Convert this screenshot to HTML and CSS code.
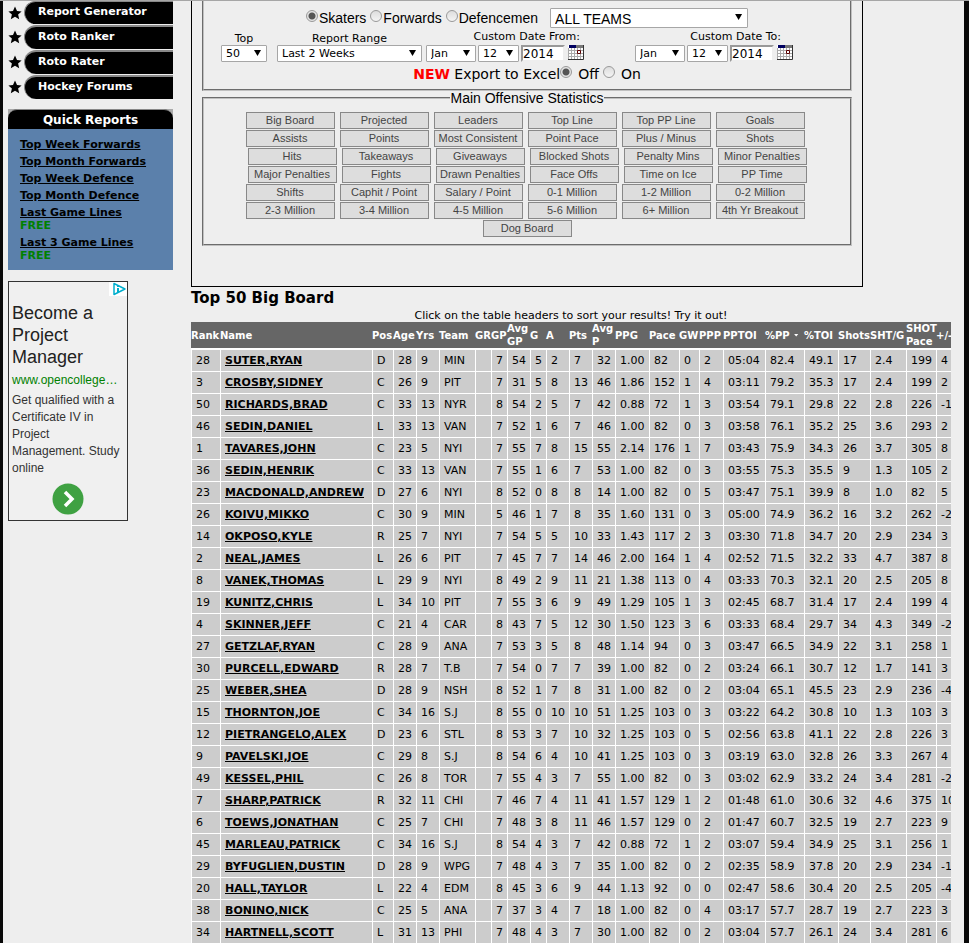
FILE: index.html
```html
<!DOCTYPE html>
<html lang="en">
<head>
<meta charset="utf-8">
<title>Top 50 Big Board</title>
<link rel="stylesheet" href="styles.css">
</head>
<body>
<svg class="defs" width="0" height="0" aria-hidden="true">
  <symbol id="star" viewBox="0 0 14 14"><path d="M7 0.6 9 5 13.6 5.4 10.1 8.5 11.2 13.2 7 10.8 2.8 13.2 3.9 8.5 0.4 5.4 5 5Z"/></symbol>
  <symbol id="calendar" viewBox="0 0 16 15">
    <path fill="#fff" d="M0 0h16v15H0z"/>
    <path fill="#777" d="M7 0h9v3H7z"/>
    <path fill="#000060" d="M1 0h7v3H1z"/>
    <path fill="none" stroke="#aaa" d="M.5 3v12M3.500 3v12M6.500 3v12M9.500 3v12M12.500 3v12M0 5.500h15M0 8.500h15M0 11.500h15"/>
    <path fill="none" stroke="#333" d="M15.500 0v14.500H0"/>
    <path fill="#fff" stroke="#5a0000" d="M9.500 5.500h3v3h-3z"/>
  </symbol>
</svg>
<div class="page">
  <aside class="sidebar">
    <nav>
      <ul class="menu">
        <li><svg class="star"><use href="#star"/></svg><a href="#">Report Generator</a></li>
        <li><svg class="star"><use href="#star"/></svg><a href="#">Roto Ranker</a></li>
        <li><svg class="star"><use href="#star"/></svg><a href="#">Roto Rater</a></li>
        <li><svg class="star"><use href="#star"/></svg><a href="#">Hockey Forums</a></li>
      </ul>
    </nav>
    <section class="quick">
      <h2>Quick Reports</h2>
      <ul>
        <li><a href="#">Top Week Forwards</a></li>
        <li><a href="#">Top Month Forwards</a></li>
        <li><a href="#">Top Week Defence</a></li>
        <li><a href="#">Top Month Defence</a></li>
        <li><a href="#">Last Game Lines</a><span class="free">FREE</span></li>
        <li><a href="#">Last 3 Game Lines</a><span class="free">FREE</span></li>
      </ul>
    </section>
    <section class="ad">
      <svg class="adchoices" viewBox="0 0 18 14"><path fill="none" stroke="#00aecd" stroke-width="1.500" stroke-linejoin="round" d="M5 1.500 16 7 5 12.500Z"/><path fill="#00aecd" d="M8 3.500h2v1.500H8zM8 6h2v4H8z"/></svg>
      <h3>Become a Project Manager</h3>
      <a class="ad-url" href="#">www.opencollege…</a>
      <p>Get qualified with a Certificate IV in Project Management. Study online</p>
      <svg class="ad-go" viewBox="0 0 32 32"><circle cx="16" cy="16" r="15.500" fill="#3fa142"/><path fill="none" stroke="#fff" stroke-width="3.500" d="M13 9l7 7-7 7"/></svg>
    </section>
  </aside>

  <main>
    <form class="report">
      <fieldset class="filters">
        <div class="row players">
          <label><input type="radio" name="pos" checked>Skaters</label>
          <label><input type="radio" name="pos">Forwards</label>
          <label><input type="radio" name="pos">Defencemen</label>
          <span class="select team"><select aria-label="Team"><option>ALL TEAMS</option></select></span>
        </div>
        <div class="row dates">
          <div class="field">
            <label for="top">Top</label>
            <span class="select top"><select id="top"><option>50</option></select></span>
          </div>
          <div class="field">
            <label for="range">Report Range</label>
            <span class="select range"><select id="range"><option>Last 2 Weeks</option></select></span>
          </div>
          <div class="field custom">
            <label for="from-month">Custom Date From:</label>
            <div class="date">
              <span class="select month"><select id="from-month"><option>Jan</option></select></span>
              <span class="select day"><select aria-label="From day"><option>12</option></select></span>
              <input type="text" value="2014" aria-label="From year">
              <svg class="cal"><use href="#calendar"/></svg>
            </div>
          </div>
          <div class="field custom to">
            <label for="to-month">Custom Date To:</label>
            <div class="date">
              <span class="select month"><select id="to-month"><option>Jan</option></select></span>
              <span class="select day"><select aria-label="To day"><option>12</option></select></span>
              <input type="text" value="2014" aria-label="To year">
              <svg class="cal"><use href="#calendar"/></svg>
            </div>
          </div>
        </div>
        <div class="row export">
          <span><strong>NEW</strong> Export to Excel</span>
          <label><input type="radio" name="excel" checked>Off</label>
          <label><input type="radio" name="excel">On</label>
        </div>
      </fieldset>
      <fieldset class="stats">
        <legend>Main Offensive Statistics</legend>
        <div class="buttons trailing"><button type="button">Big Board</button><button type="button">Projected</button><button type="button">Leaders</button><button type="button">Top Line</button><button type="button">Top PP Line</button><button type="button">Goals</button></div>
        <div class="buttons trailing"><button type="button">Assists</button><button type="button">Points</button><button type="button">Most Consistent</button><button type="button">Point Pace</button><button type="button">Plus / Minus</button><button type="button">Shots</button></div>
        <div class="buttons"><button type="button">Hits</button><button type="button">Takeaways</button><button type="button">Giveaways</button><button type="button">Blocked Shots</button><button type="button">Penalty Mins</button><button type="button">Minor Penalties</button></div>
        <div class="buttons"><button type="button">Major Penalties</button><button type="button">Fights</button><button type="button">Drawn Penalties</button><button type="button">Face Offs</button><button type="button">Time on Ice</button><button type="button">PP Time</button></div>
        <div class="buttons trailing"><button type="button">Shifts</button><button type="button">Caphit / Point</button><button type="button">Salary / Point</button><button type="button">0-1 Million</button><button type="button">1-2 Million</button><button type="button">0-2 Million</button></div>
        <div class="buttons trailing"><button type="button">2-3 Million</button><button type="button">3-4 Million</button><button type="button">4-5 Million</button><button type="button">5-6 Million</button><button type="button">6+ Million</button><button type="button">4th Yr Breakout</button></div>
        <div class="buttons"><button type="button">Dog Board</button></div>
      </fieldset>
    </form>

    <h1>Top 50 Big Board</h1>
    <p class="hint">Click on the table headers to sort your results! Try it out!</p>
    <div class="board">
      <table>
        <colgroup><col class="w29"><col class="w152"><col class="w21"><col class="w23"><col class="w23"><col class="w36"><col class="w16"><col class="w16"><col class="w23"><col class="w16"><col class="w23"><col class="w23"><col class="w23"><col class="w34"><col class="w30"><col class="w20"><col class="w24"><col class="w42"><col class="w39"><col class="w34"><col class="w32"><col class="w36"><col class="w30"><col class="w30"></colgroup>
        <thead>
          <tr><th>Rank<th>Name<th>Pos<th>Age<th>Yrs<th>Team<th>GR<th>GP<th>Avg<br>GP<th>G<th>A<th>Pts<th>Avg<br>P<th>PPG<th>Pace<th>GW<th>PPP<th>PPTOI<th class="sorted">%PP<th>%TOI<th>Shots<th>SHT/G<th>SHOT<br>Pace<th>+/-</tr>
        </thead>
        <tbody>
          <tr><td>28<td><a href="#">SUTER,RYAN</a><td>D<td>28<td>9<td>MIN<td><td>7<td>54<td>5<td>2<td>7<td>32<td>1.00<td>82<td>0<td>2<td>05:04<td>82.4<td>49.1<td>17<td>2.4<td>199<td>4</tr>
          <tr><td>3<td><a href="#">CROSBY,SIDNEY</a><td>C<td>26<td>9<td>PIT<td><td>7<td>31<td>5<td>8<td>13<td>46<td>1.86<td>152<td>1<td>4<td>03:11<td>79.2<td>35.3<td>17<td>2.4<td>199<td>2</tr>
          <tr><td>50<td><a href="#">RICHARDS,BRAD</a><td>C<td>33<td>13<td>NYR<td><td>8<td>54<td>2<td>5<td>7<td>42<td>0.88<td>72<td>1<td>3<td>03:54<td>79.1<td>29.8<td>22<td>2.8<td>226<td>-1</tr>
          <tr><td>46<td><a href="#">SEDIN,DANIEL</a><td>L<td>33<td>13<td>VAN<td><td>7<td>52<td>1<td>6<td>7<td>46<td>1.00<td>82<td>0<td>3<td>03:58<td>76.1<td>35.2<td>25<td>3.6<td>293<td>2</tr>
          <tr><td>1<td><a href="#">TAVARES,JOHN</a><td>C<td>23<td>5<td>NYI<td><td>7<td>55<td>7<td>8<td>15<td>55<td>2.14<td>176<td>1<td>7<td>03:43<td>75.9<td>34.3<td>26<td>3.7<td>305<td>8</tr>
          <tr><td>36<td><a href="#">SEDIN,HENRIK</a><td>C<td>33<td>13<td>VAN<td><td>7<td>55<td>1<td>6<td>7<td>53<td>1.00<td>82<td>0<td>3<td>03:55<td>75.3<td>35.5<td>9<td>1.3<td>105<td>2</tr>
          <tr><td>23<td><a href="#">MACDONALD,ANDREW</a><td>D<td>27<td>6<td>NYI<td><td>8<td>52<td>0<td>8<td>8<td>14<td>1.00<td>82<td>0<td>5<td>03:47<td>75.1<td>39.9<td>8<td>1.0<td>82<td>5</tr>
          <tr><td>26<td><a href="#">KOIVU,MIKKO</a><td>C<td>30<td>9<td>MIN<td><td>5<td>46<td>1<td>7<td>8<td>35<td>1.60<td>131<td>0<td>3<td>05:00<td>74.9<td>36.2<td>16<td>3.2<td>262<td>-2</tr>
          <tr><td>14<td><a href="#">OKPOSO,KYLE</a><td>R<td>25<td>7<td>NYI<td><td>7<td>54<td>5<td>5<td>10<td>33<td>1.43<td>117<td>2<td>3<td>03:30<td>71.8<td>34.7<td>20<td>2.9<td>234<td>3</tr>
          <tr><td>2<td><a href="#">NEAL,JAMES</a><td>L<td>26<td>6<td>PIT<td><td>7<td>45<td>7<td>7<td>14<td>46<td>2.00<td>164<td>1<td>4<td>02:52<td>71.5<td>32.2<td>33<td>4.7<td>387<td>8</tr>
          <tr><td>8<td><a href="#">VANEK,THOMAS</a><td>L<td>29<td>9<td>NYI<td><td>8<td>49<td>2<td>9<td>11<td>21<td>1.38<td>113<td>0<td>4<td>03:33<td>70.3<td>32.1<td>20<td>2.5<td>205<td>8</tr>
          <tr><td>19<td><a href="#">KUNITZ,CHRIS</a><td>L<td>34<td>10<td>PIT<td><td>7<td>55<td>3<td>6<td>9<td>49<td>1.29<td>105<td>1<td>3<td>02:45<td>68.7<td>31.4<td>17<td>2.4<td>199<td>4</tr>
          <tr><td>4<td><a href="#">SKINNER,JEFF</a><td>C<td>21<td>4<td>CAR<td><td>8<td>43<td>7<td>5<td>12<td>30<td>1.50<td>123<td>3<td>6<td>03:33<td>68.4<td>29.7<td>34<td>4.3<td>349<td>-2</tr>
          <tr><td>27<td><a href="#">GETZLAF,RYAN</a><td>C<td>28<td>9<td>ANA<td><td>7<td>53<td>3<td>5<td>8<td>48<td>1.14<td>94<td>0<td>3<td>03:47<td>66.5<td>34.9<td>22<td>3.1<td>258<td>1</tr>
          <tr><td>30<td><a href="#">PURCELL,EDWARD</a><td>R<td>28<td>7<td>T.B<td><td>7<td>54<td>0<td>7<td>7<td>39<td>1.00<td>82<td>0<td>2<td>03:24<td>66.1<td>30.7<td>12<td>1.7<td>141<td>3</tr>
          <tr><td>25<td><a href="#">WEBER,SHEA</a><td>D<td>28<td>9<td>NSH<td><td>8<td>52<td>1<td>7<td>8<td>31<td>1.00<td>82<td>0<td>2<td>03:04<td>65.1<td>45.5<td>23<td>2.9<td>236<td>-4</tr>
          <tr><td>15<td><a href="#">THORNTON,JOE</a><td>C<td>34<td>16<td>S.J<td><td>8<td>55<td>0<td>10<td>10<td>51<td>1.25<td>103<td>0<td>3<td>03:22<td>64.2<td>30.8<td>10<td>1.3<td>103<td>3</tr>
          <tr><td>12<td><a href="#">PIETRANGELO,ALEX</a><td>D<td>23<td>6<td>STL<td><td>8<td>53<td>3<td>7<td>10<td>32<td>1.25<td>103<td>0<td>5<td>02:56<td>63.8<td>41.1<td>22<td>2.8<td>226<td>3</tr>
          <tr><td>9<td><a href="#">PAVELSKI,JOE</a><td>C<td>29<td>8<td>S.J<td><td>8<td>54<td>6<td>4<td>10<td>41<td>1.25<td>103<td>0<td>3<td>03:19<td>63.0<td>32.8<td>26<td>3.3<td>267<td>4</tr>
          <tr><td>49<td><a href="#">KESSEL,PHIL</a><td>C<td>26<td>8<td>TOR<td><td>7<td>55<td>4<td>3<td>7<td>55<td>1.00<td>82<td>0<td>3<td>03:02<td>62.9<td>33.2<td>24<td>3.4<td>281<td>-2</tr>
          <tr><td>7<td><a href="#">SHARP,PATRICK</a><td>R<td>32<td>11<td>CHI<td><td>7<td>46<td>7<td>4<td>11<td>41<td>1.57<td>129<td>1<td>2<td>01:48<td>61.0<td>30.6<td>32<td>4.6<td>375<td>10</tr>
          <tr><td>6<td><a href="#">TOEWS,JONATHAN</a><td>C<td>25<td>7<td>CHI<td><td>7<td>48<td>3<td>8<td>11<td>46<td>1.57<td>129<td>0<td>2<td>01:47<td>60.7<td>32.5<td>19<td>2.7<td>223<td>9</tr>
          <tr><td>45<td><a href="#">MARLEAU,PATRICK</a><td>C<td>34<td>16<td>S.J<td><td>8<td>54<td>4<td>3<td>7<td>42<td>0.88<td>72<td>1<td>2<td>03:07<td>59.4<td>34.9<td>25<td>3.1<td>256<td>1</tr>
          <tr><td>29<td><a href="#">BYFUGLIEN,DUSTIN</a><td>D<td>28<td>9<td>WPG<td><td>7<td>48<td>4<td>3<td>7<td>35<td>1.00<td>82<td>0<td>2<td>02:35<td>58.9<td>37.8<td>20<td>2.9<td>234<td>-1</tr>
          <tr><td>20<td><a href="#">HALL,TAYLOR</a><td>L<td>22<td>4<td>EDM<td><td>8<td>45<td>3<td>6<td>9<td>44<td>1.13<td>92<td>0<td>0<td>02:47<td>58.6<td>30.4<td>20<td>2.5<td>205<td>-4</tr>
          <tr><td>38<td><a href="#">BONINO,NICK</a><td>C<td>25<td>5<td>ANA<td><td>7<td>37<td>3<td>4<td>7<td>18<td>1.00<td>82<td>0<td>4<td>03:17<td>57.7<td>28.7<td>19<td>2.7<td>223<td>3</tr>
          <tr><td>34<td><a href="#">HARTNELL,SCOTT</a><td>L<td>31<td>13<td>PHI<td><td>7<td>48<td>4<td>3<td>7<td>30<td>1.00<td>82<td>0<td>2<td>03:04<td>57.7<td>26.1<td>24<td>3.4<td>281<td>6</tr>
        </tbody>
      </table>
    </div>
  </main>
</div>
</body>
</html>
```
FILE: styles.css
```css
* { box-sizing: border-box; }

body {
  margin: 0;
  background: #080808;
  border-top: 1px solid #a6a6a6;
  color: #000;
  font: 11px/13px "DejaVu Sans", Verdana, sans-serif;
}

.defs { position: absolute; }
h1, h2, h3, p, ul { margin: 0; padding: 0; }
ul { list-style: none; }
a { color: inherit; }

.page {
  display: grid;
  grid-template-columns: 165px minmax(0, 1fr);
  column-gap: 18px;
  margin: 0 5px 0 3px;
  padding: 0 13px 0 5px;
  background: #eee;
}

/* Sidebar */
.menu li {
  display: flex;
  align-items: center;
  height: 24px;
  margin-bottom: 1px;
}
.menu li:first-child { height: 23px; }
.star { width: 14px; height: 14px; margin-right: 2px; }
.menu a {
  flex: 1;
  height: 100%;
  padding-left: 13px;
  border-top: 2px solid #888;
  border-left: 1px solid #888;
  border-radius: 12px 0 0 12px;
  background: #000;
  color: #fff;
  font-weight: bold;
  line-height: 20px;
  text-decoration: none;
}
.menu li:first-child a { border-top-width: 1px; }

.quick { margin-top: 10px; background: linear-gradient(#aaa 20px, #5b80ab 20px); }
.quick h2 {
  height: 20px;
  border-top: 1px solid #888;
  border-radius: 9px 9px 0 0;
  background: #000;
  color: #fff;
  font-size: 12px;
  line-height: 20px;
  text-align: center;
}
.quick ul { padding: 9px 12px 4px; font-weight: bold; }
.quick li { padding-bottom: 4px; }
.quick a, .free { display: block; width: max-content; }
.free { color: #008000; }

.ad {
  position: relative;
  width: 120px;
  height: 240px;
  margin-top: 11px;
  padding: 20px 3px 0;
  border: 1px solid #333;
  background: #f0f0f0;
  color: #333;
  font: 12px/17px "Liberation Sans", Arial, sans-serif;
}
.adchoices {
  position: absolute;
  top: 0;
  right: 0;
  width: 18px;
  height: 14px;
  background: #fff;
}
.ad h3 { color: #222; font-size: 18px; font-weight: normal; line-height: 22px; }
.ad-url { display: block; margin: 4px 0 3px; color: #008000; text-decoration: none; }
.ad-go { display: block; width: 32px; height: 32px; margin: 6px auto 0; }

/* Report form */
.report {
  max-width: 672px;
  padding: 0 10px 40px;
  border: 1px solid #000;
  border-top: 0;
}
fieldset { min-width: 0; margin: 0; border: 2px groove #c0c0c0; }
.filters { padding: 7px 0 5px; border-top: 0; }
.stats { padding: 7px 0 6px; }
legend {
  margin: 0 auto;
  padding: 0;
  font: 14px/14px "Liberation Sans", Arial, sans-serif;
}

.row { display: flex; }
.row input[type="radio"] {
  appearance: none;
  width: 12px;
  height: 12px;
  margin: 0 1px 4px 0;
  border: 1px solid #999;
  border-radius: 50%;
  background: linear-gradient(#ddd, #f4f4f4);
}
.row input[type="radio"]:checked { background: radial-gradient(circle, #555 0 3px, #e4e4e4 4px); }
.players label, .export label { display: flex; align-items: center; }
.players {
  justify-content: center;
  gap: 4px;
  font: 14px/20px "Liberation Sans", Arial, sans-serif;
}

.select { position: relative; display: block; height: 17px; }
.select::after {
  content: "";
  position: absolute;
  top: 5px;
  right: 6px;
  width: 7px;
  height: 6px;
  background: #000;
  clip-path: polygon(0 0, 100% 0, 50% 100%);
  pointer-events: none;
}
select {
  appearance: none;
  display: block;
  width: 100%;
  height: 100%;
  padding: 0 4px;
  border: 1px solid #a6a6a6;
  border-radius: 1px;
  background: #fff;
  color: #000;
  font: inherit;
}
.team { width: 198px; height: 20px; margin-left: 8px; }
.team::after { top: 6px; }
.top { width: 46px; }
.range { width: 145px; }
.month { width: 50px; }
.day { width: 41px; }

.dates { align-items: flex-end; margin-top: 2px; padding-left: 17px; }
.field label { display: block; text-align: center; }
.field + .field { margin-left: 10px; }
.field + .custom { margin-left: 4px; }
.field + .to { margin-left: 51px; }
.custom label { padding: 0 4px 2px 0; text-align: right; }
.field.to label { padding-right: 12px; }
.date { display: flex; gap: 2px; }
.date input {
  width: 44px;
  height: 17px;
  padding: 0;
  border: 2px solid #eee;
  border-top-color: #999;
  border-left-color: #999;
  background: #fff;
  font: 12px/13px "DejaVu Sans", Verdana, sans-serif;
}
.cal { width: 16px; height: 15px; margin-left: 1px; }

.export { justify-content: center; gap: 4px; margin-top: 2px; font-size: 14px; line-height: 20px; }
.export strong { color: #f00; }
.export span { margin-right: -4px; }
.export input[type="radio"] { margin-right: 6px; }

.buttons { display: flex; justify-content: center; gap: 5px; margin-bottom: 1px; }
.trailing { padding-right: 4px; }
.buttons button {
  width: 89px;
  height: 17px;
  padding: 0;
  border: 1px solid #888;
  background: #ddd;
  color: #444;
  font: 11px/15px "Liberation Sans", Arial, sans-serif;
  white-space: nowrap;
}

/* Results */
h1 { font-size: 15px; line-height: 22px; }
.hint { text-align: center; }
.board { overflow: hidden; }
table { width: 775px; table-layout: fixed; border-collapse: separate; border-spacing: 0; background: #fff; }
.w16 { width: 16px; }
.w20 { width: 20px; }
.w21 { width: 21px; }
.w23 { width: 23px; }
.w24 { width: 24px; }
.w29 { width: 29px; }
.w30 { width: 30px; }
.w32 { width: 32px; }
.w34 { width: 34px; }
.w36 { width: 36px; }
.w39 { width: 39px; }
.w42 { width: 42px; }
.w152 { width: 152px; }
th {
  height: 28px;
  padding: 0;
  border-bottom: 2px solid #fff;
  background: #666;
  color: #fff;
  font-size: 10px;
  line-height: 13px;
  text-align: left;
  white-space: nowrap;
}
.sorted::after {
  content: "";
  display: inline-block;
  width: 5px;
  height: 3px;
  margin-left: 4px;
  background: #fff;
  clip-path: polygon(0 0, 100% 0, 50% 100%);
  vertical-align: 2px;
}
td {
  height: 22px;
  padding: 0 0 0 4px;
  border-top: 1px solid #fff;
  border-left: 1px solid #fff;
  background: #ccc;
  white-space: nowrap;
}
tbody tr:first-child td { height: 21px; border-top: 0; }
td a { font-weight: bold; }
```
